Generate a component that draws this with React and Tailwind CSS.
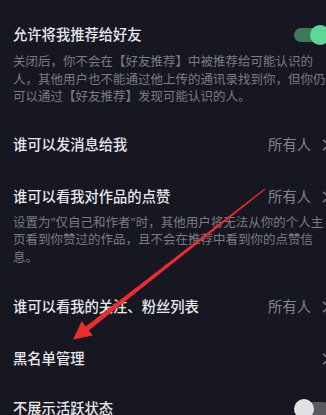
import React from "react";

const FONT = { fontFamily: '"Noto Sans", "Noto Sans CJK SC", sans-serif' };

function Chevron() {
  return (
    <svg width="8" height="12" viewBox="0 0 8 12" className="ml-[11px] shrink-0">
      <path d="M1.5 1.2 L6.5 6 L1.5 10.8" fill="none" stroke="#85868c" strokeWidth="1.4" strokeLinecap="round" strokeLinejoin="round" />
    </svg>
  );
}

function ToggleOn() {
  return (
    <div className="relative w-[36px] h-[20px] shrink-0">
      <div className="absolute left-0 right-[2px] top-[3px] h-[14px] rounded-full bg-[#3d7a5a]" />
      <div className="absolute right-0 top-0 w-[20px] h-[20px] rounded-full bg-[#5fd79a]" />
    </div>
  );
}

function ToggleOff() {
  return (
    <div className="relative w-[36px] h-[20px] shrink-0">
      <div className="absolute left-[4px] right-0 top-[3px] h-[14px] rounded-full bg-[#59595e]" />
      <div className="absolute left-0 top-0 w-[20px] h-[20px] rounded-full bg-[#e2e2e4]" />
    </div>
  );
}

function Title({ children }) {
  return (
    <div className="text-[14.3px] leading-[22px] font-medium text-[#e7e7ea] whitespace-nowrap">{children}</div>
  );
}

function Value() {
  return (
    <div className="flex items-center">
      <span className="text-[14.3px] leading-[22px] text-[#85868c]">所有人</span>
      <Chevron />
    </div>
  );
}

function Desc({ lines, className }) {
  return (
    <div className={"text-[12.5px] leading-[17.5px] text-[#7b7c82] " + className}>
      {lines.map((l, i) => (
        <div key={i} className="whitespace-nowrap">{l}</div>
      ))}
    </div>
  );
}

export default function App() {
  return (
    <div className="relative w-[326px] h-[415px] overflow-hidden bg-[#161721]" style={FONT}>
      <div className="w-[342px] pl-[13px] pr-[12px]">
        {/* Row A */}
        <div className="pt-[24px] pb-[13.5px]">
          <div className="flex items-center justify-between">
            <Title>允许将我推荐给好友</Title>
            <ToggleOn />
          </div>
          <Desc
            className="mt-[7px]"
            lines={[
              "关闭后，你不会在【好友推荐】中被推荐给可能认识的",
              "人，其他用户也不能通过他上传的通讯录找到你，但你仍",
              "可以通过【好友推荐】发现可能认识的人。",
            ]}
          />
        </div>
        {/* Row B */}
        <div className="h-[52px] flex items-center justify-between">
          <Title>谁可以发消息给我</Title>
          <Value />
        </div>
        {/* Row C */}
        <div className="pt-[15px] pb-[15px]">
          <div className="flex items-center justify-between">
            <Title>谁可以看我对作品的点赞</Title>
            <Value />
          </div>
          <Desc
            className="mt-[5.5px]"
            lines={[
              "设置为\"仅自己和作者\"时，其他用户将无法从你的个人主",
              "页看到你赞过的作品，且不会在推荐中看到你的点赞信",
              "息。",
            ]}
          />
        </div>
        {/* Row D */}
        <div className="h-[52px] flex items-center justify-between">
          <Title>谁可以看我的关注、粉丝列表</Title>
          <Value />
        </div>
        {/* Row E */}
        <div className="h-[51px] flex items-center justify-between">
          <Title>黑名单管理</Title>
          <Chevron />
        </div>
        {/* Row F */}
        <div className="h-[50px] flex items-center justify-between">
          <Title>不展示活跃状态</Title>
          <ToggleOff />
        </div>
      </div>

      {/* Red annotation arrow */}
      <svg className="absolute left-0 top-0 pointer-events-none" width="326" height="415" viewBox="0 0 326 415">
        <polygon
          points="265.3,189.4 88.7,330.4 92.7,335.5 73,339.5 81.7,321.3 85.7,326.4 264.7,188.6"
          fill="#ee2c2c"
        />
      </svg>
    </div>
  );
}
